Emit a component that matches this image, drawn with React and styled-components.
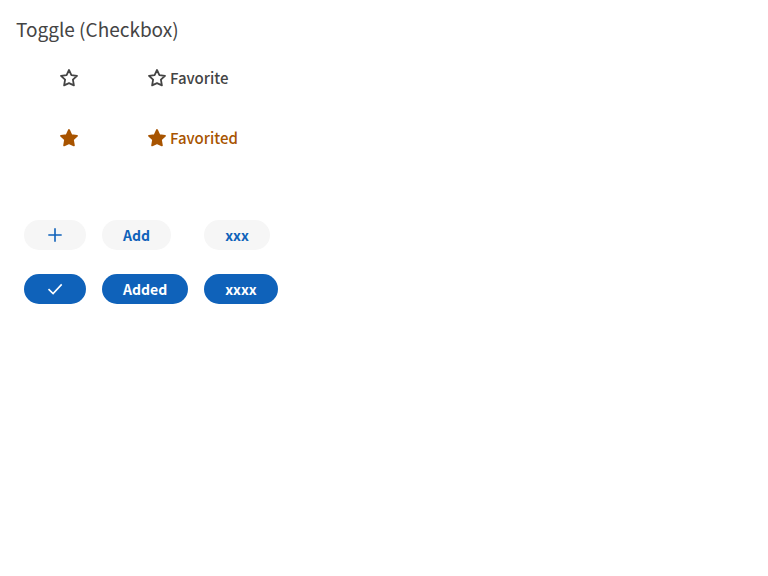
import React, { useState } from "react";
import styled, { createGlobalStyle, css } from "styled-components";

const GlobalStyle = createGlobalStyle`
  *, *::before, *::after { box-sizing: border-box; }
  body {
    margin: 0;
    background: #fff;
    color: #444;
    font-family: "Source Sans Pro", "Noto Sans CJK SC", sans-serif;
  }
`;

const Page = styled.main`
  padding: 16px;
`;

const Title = styled.h1`
  margin: 0;
  font-size: 19px;
  line-height: 26px;
  font-weight: 400;
`;

const FavoriteGrid = styled.div`
  display: grid;
  grid-template-columns: max-content max-content;
  column-gap: 70px;
  row-gap: 30px;
  margin-top: 21px;
  padding: 0 44px;
`;

const PillGrid = styled.div`
  display: grid;
  grid-template-columns: repeat(3, max-content);
  justify-items: start;
  column-gap: 16px;
  row-gap: 24px;
  margin-top: 67px;
  padding: 0 8px;
`;

const HiddenCheckbox = styled.input`
  position: absolute;
  inset: 0;
  width: 100%;
  height: 100%;
  margin: 0;
  opacity: 0;
  cursor: pointer;
`;

const toggleBase = css`
  position: relative;
  display: inline-flex;
  align-items: center;
  height: 30px;
  line-height: 30px;
  cursor: pointer;
`;

const FavoriteLabel = styled.label`
  ${toggleBase}
  gap: 4px;
  font-size: 15px;
  font-weight: 500;
  color: ${(p) => (p.$on ? "#a85400" : "#444")};
`;

const PillLabel = styled.label`
  ${toggleBase}
  justify-content: center;
  padding: 0 ${(p) => (p.$icon ? 23 : 21)}px;
  border-radius: 15px;
  font-size: 14px;
  font-weight: 700;
  color: ${(p) => (p.$on ? "#fff" : "#0f62ba")};
  background: ${(p) => (p.$on ? "#0f62ba" : "#f6f6f6")};
`;

const Icon = styled.svg`
  display: block;
  flex: none;
  fill: none;
  stroke: currentColor;
`;

function StarIcon({ filled }) {
  return (
    <Icon width="18" height="18" viewBox="0 0 18 18" aria-hidden="true">
      <path
        d="M9 1L11.4 6.1L17 6.8L12.9 10.6L13.9 16.3L9 14.2L4.1 16.3L5.1 10.6L1 6.8L6.6 6.1Z"
        fill={filled ? "currentColor" : "none"}
        strokeWidth="1.8"
        strokeLinejoin="round"
      />
    </Icon>
  );
}

function PlusIcon() {
  return (
    <Icon width="16" height="16" viewBox="0 0 16 16" aria-hidden="true">
      <path d="M8 1.3V14.7M1.3 8H14.7" strokeWidth="1.6" />
    </Icon>
  );
}

function CheckIcon() {
  return (
    <Icon width="16" height="16" viewBox="0 0 16 16" aria-hidden="true">
      <path d="M1.5 8.2L6.1 12.6L14.7 3.4" strokeWidth="1.6" />
    </Icon>
  );
}

function FavoriteToggle({ initial = false, labelled = false }) {
  const [on, setOn] = useState(initial);
  const text = on ? "Favorited" : "Favorite";
  return (
    <FavoriteLabel $on={on}>
      <HiddenCheckbox
        type="checkbox"
        checked={on}
        onChange={(e) => setOn(e.target.checked)}
        aria-label={labelled ? undefined : text}
      />
      <StarIcon filled={on} />
      {labelled && <span>{text}</span>}
    </FavoriteLabel>
  );
}

function PillToggle({ initial = false, offText, onText }) {
  const [on, setOn] = useState(initial);
  const icon = !offText;
  return (
    <PillLabel $on={on} $icon={icon}>
      <HiddenCheckbox
        type="checkbox"
        checked={on}
        onChange={(e) => setOn(e.target.checked)}
        aria-label={icon ? "Add" : undefined}
      />
      {icon ? on ? <CheckIcon /> : <PlusIcon /> : <span>{on ? onText : offText}</span>}
    </PillLabel>
  );
}

export default function App() {
  return (
    <>
      <GlobalStyle />
      <Page>
        <Title>Toggle (Checkbox)</Title>
        <FavoriteGrid>
          <FavoriteToggle />
          <FavoriteToggle labelled />
          <FavoriteToggle initial />
          <FavoriteToggle initial labelled />
        </FavoriteGrid>
        <PillGrid>
          <PillToggle />
          <PillToggle offText="Add" onText="Added" />
          <PillToggle offText="xxx" onText="xxxx" />
          <PillToggle initial />
          <PillToggle initial offText="Add" onText="Added" />
          <PillToggle initial offText="xxx" onText="xxxx" />
        </PillGrid>
      </Page>
    </>
  );
}
